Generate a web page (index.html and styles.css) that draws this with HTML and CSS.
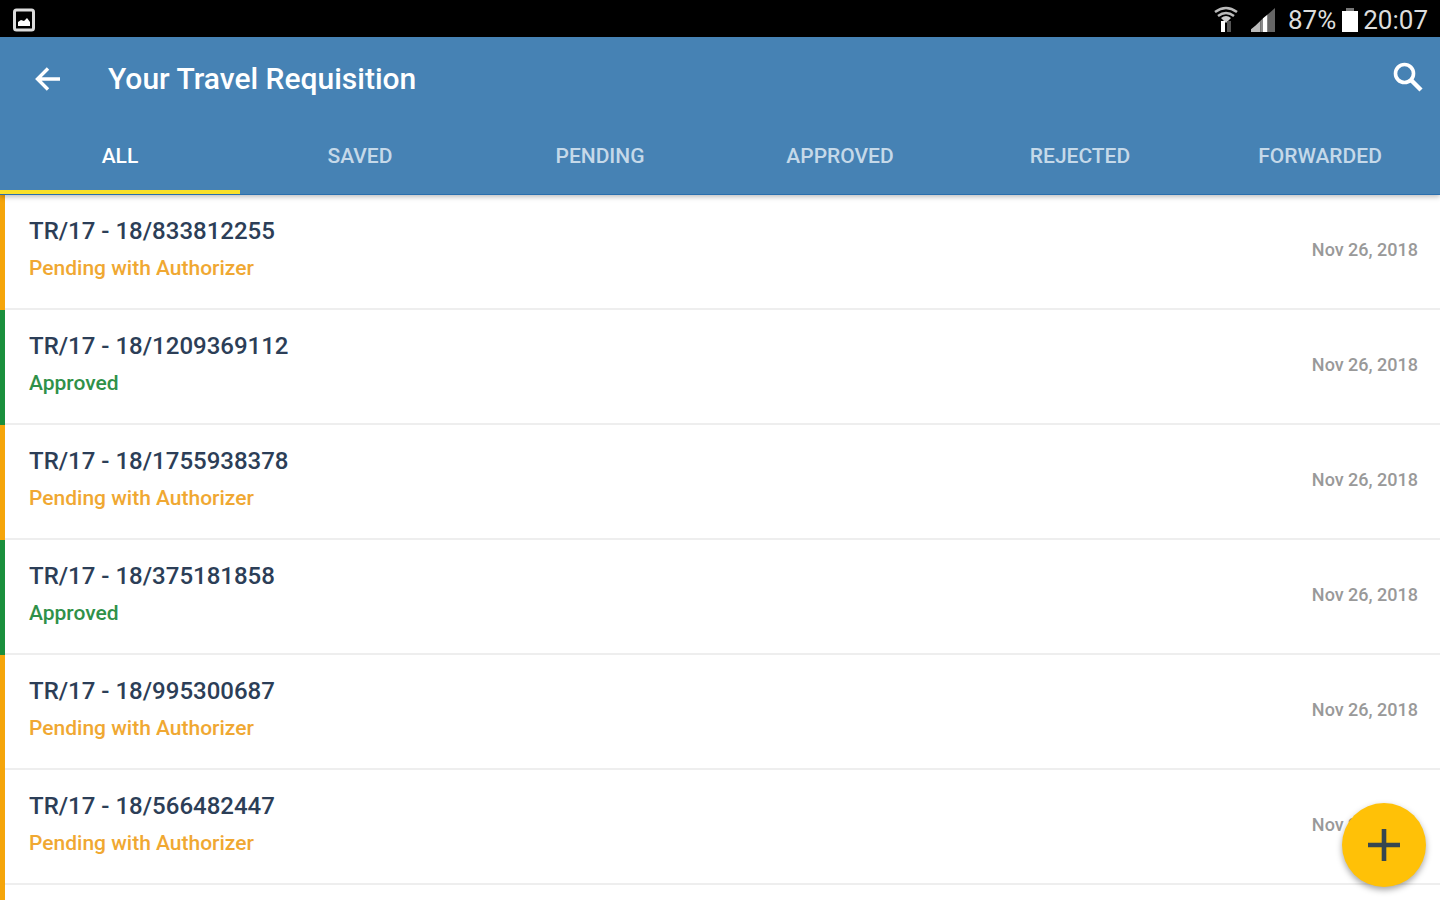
FILE: index.html
```html
<!DOCTYPE html>
<html lang="en">
    <head>
        <meta charset="UTF-8" />
        <meta name="viewport" content="width=device-width, initial-scale=1.0" />
        <title>Your Travel Requisition</title>
        <link rel="stylesheet" href="styles.css">
    </head>
    <body>
        <div class="status-bar">
            <svg class="icon-image" viewBox="0 0 24 24">
                <rect x="2.5" y="2" width="19" height="20" rx="2" fill="none" stroke="#ddd" stroke-width="3" />
                <path d="M6 18v-4l3-2 3 1 3-3 3 4v4z" fill="#fff" />
            </svg>
            <div class="status-right">
                <svg class="icon-wifi" viewBox="0 0 24 28">
                    <path d="M1 6Q12-2 23 6M4 10q8-6 16 0" fill="none" stroke="#bbb" stroke-width="2.5" />
                    <path d="M7 12q5-4 10 0l-5 5z" fill="#ccc" />
                    <path d="M9 15v11" fill="none" stroke="#fff" stroke-width="4" />
                    <path d="M15 15v11" fill="none" stroke="#555" stroke-width="4" />
                </svg>
                <svg class="icon-signal" viewBox="0 0 26 26">
                    <path d="M0 26v-3l5-4 5-5v12z" fill="#bbb" />
                    <path d="M10 26V14l3-3v15z" fill="#888" />
                    <path d="M13 26V11l5-4v19z" fill="#fff" />
                    <path d="M18 26V7l8-7v26z" fill="#666" />
                </svg>
                <span class="battery-level">87%</span>
                <svg class="icon-battery" viewBox="0 0 16 24">
                    <path d="M4 0h8v3H4z" fill="#777" />
                    <path d="M0 3h16v21H0z" fill="#fff" />
                </svg>
                <span>20:07</span>
            </div>
        </div>

        <header class="app-header">
            <div class="toolbar">
                <button class="icon-button" aria-label="Back">
                    <svg class="icon-back" viewBox="0 0 26 24">
                        <path d="M25 12H3M13 1.5L2.5 12 13 22.5" fill="none" stroke="currentColor" stroke-width="3.4" />
                    </svg>
                </button>
                <h1>Your Travel Requisition</h1>
                <button class="icon-button search" aria-label="Search">
                    <svg class="icon-search" viewBox="0 0 30 30">
                        <circle cx="11.5" cy="11.5" r="9" fill="none" stroke="currentColor" stroke-width="3.6" />
                        <path d="M18 18l10 10" fill="none" stroke="currentColor" stroke-width="4.4" />
                    </svg>
                </button>
            </div>
            <nav class="tabs">
                <a href="#all" class="tab active">ALL</a>
                <a href="#saved" class="tab">SAVED</a>
                <a href="#pending" class="tab">PENDING</a>
                <a href="#approved" class="tab">APPROVED</a>
                <a href="#rejected" class="tab">REJECTED</a>
                <a href="#forwarded" class="tab">FORWARDED</a>
            </nav>
        </header>

        <main class="content">
            <ul class="requisitions">
                <li class="requisition pending">
                    <div class="details">
                        <h2>TR/17 - 18/833812255</h2>
                        <p class="state">Pending with Authorizer</p>
                    </div>
                    <time datetime="2018-11-26">Nov 26, 2018</time>
                </li>
                <li class="requisition approved">
                    <div class="details">
                        <h2>TR/17 - 18/1209369112</h2>
                        <p class="state">Approved</p>
                    </div>
                    <time datetime="2018-11-26">Nov 26, 2018</time>
                </li>
                <li class="requisition pending">
                    <div class="details">
                        <h2>TR/17 - 18/1755938378</h2>
                        <p class="state">Pending with Authorizer</p>
                    </div>
                    <time datetime="2018-11-26">Nov 26, 2018</time>
                </li>
                <li class="requisition approved">
                    <div class="details">
                        <h2>TR/17 - 18/375181858</h2>
                        <p class="state">Approved</p>
                    </div>
                    <time datetime="2018-11-26">Nov 26, 2018</time>
                </li>
                <li class="requisition pending">
                    <div class="details">
                        <h2>TR/17 - 18/995300687</h2>
                        <p class="state">Pending with Authorizer</p>
                    </div>
                    <time datetime="2018-11-26">Nov 26, 2018</time>
                </li>
                <li class="requisition pending">
                    <div class="details">
                        <h2>TR/17 - 18/566482447</h2>
                        <p class="state">Pending with Authorizer</p>
                    </div>
                    <time datetime="2018-11-26">Nov 26, 2018</time>
                </li>
                <li class="requisition pending"></li>
            </ul>
        </main>

        <button class="fab" aria-label="Add requisition">
            <svg class="icon-plus" viewBox="0 0 34 34">
                <path d="M17 1v32M1 17h32" fill="none" stroke="currentColor" stroke-width="4.6" />
            </svg>
        </button>
    </body>
</html>
```

FILE: styles.css
```css
* {
    margin: 0;
    padding: 0;
    box-sizing: border-box;
}

body {
    font-family: Roboto, "Liberation Sans", sans-serif;
    background: #fff;
    height: 100vh;
    display: flex;
    flex-direction: column;
    overflow: hidden;
}

svg {
    display: block;
}

.status-bar {
    flex: none;
    height: 37px;
    padding: 3px 12px 0;
    display: flex;
    align-items: center;
    justify-content: space-between;
    background: #000;
    color: #ddd;
    font-size: 26px;
    line-height: 32px;
}

.status-right {
    display: flex;
    align-items: center;
}

.icon-image {
    width: 24px;
    height: 24px;
}

.icon-wifi {
    width: 24px;
    height: 28px;
    margin-right: 12px;
}

.icon-signal {
    width: 26px;
    height: 24px;
    margin-right: 12px;
}

.icon-battery {
    width: 16px;
    height: 24px;
    margin: 0 5px 0 6px;
}

.app-header {
    flex: none;
    position: relative;
    background: #4682b4;
    color: #fff;
    border-bottom: 1px solid #2a6fae;
    box-shadow: 0 2px 5px rgba(0, 0, 0, 0.25);
}

.toolbar {
    height: 84px;
    padding: 0 16px 0 32px;
    display: flex;
    align-items: center;
}

.toolbar h1 {
    flex: 1;
    margin-left: 44px;
    font-size: 30px;
    font-weight: 500;
    line-height: 36px;
}

.icon-button {
    width: 32px;
    height: 48px;
    display: flex;
    align-items: center;
    justify-content: center;
    background: none;
    border: none;
    color: #fff;
    cursor: pointer;
}

.icon-button.search {
    padding-bottom: 4px;
}

.icon-back {
    width: 26px;
    height: 24px;
}

.icon-search {
    flex: none;
    width: 30px;
    height: 30px;
}

.tabs {
    display: grid;
    grid-template-columns: repeat(6, 1fr);
}

.tab {
    height: 73px;
    display: flex;
    align-items: center;
    justify-content: center;
    border-bottom: 4px solid transparent;
    color: #c5d9e9;
    font-size: 21px;
    font-weight: 500;
    text-decoration: none;
}

.tab.active {
    color: #fff;
    border-bottom-color: #f9e02a;
}

.content {
    flex: 1;
    overflow: hidden;
}

.requisitions {
    list-style: none;
}

.requisition {
    height: 115px;
    padding: 0 22px 6px 24px;
    display: flex;
    align-items: center;
    justify-content: space-between;
    border-left: 5px solid;
    background: linear-gradient(#eee, #eee) left bottom / 100% 2px no-repeat;
}

.requisition.pending {
    border-left-color: #f5a50a;
}

.requisition.approved {
    border-left-color: #1a8f3c;
}

.details {
    padding-bottom: 2px;
}

.requisition h2 {
    margin-bottom: 8px;
    color: #2c3e57;
    font-size: 24px;
    font-weight: 500;
    line-height: 30px;
}

.state {
    font-size: 21px;
    font-weight: 500;
    line-height: 28px;
}

.pending .state {
    color: #f0a832;
}

.approved .state {
    color: #2f9149;
}

.requisition time {
    color: #999;
    font-size: 18px;
    font-weight: 500;
    line-height: 24px;
}

.fab {
    position: fixed;
    right: 14px;
    bottom: 13px;
    width: 84px;
    height: 84px;
    display: flex;
    align-items: center;
    justify-content: center;
    border: none;
    border-radius: 50%;
    background: #ffc107;
    color: #37474f;
    box-shadow: 0 3px 6px rgba(0, 0, 0, 0.35);
    cursor: pointer;
}

.icon-plus {
    width: 34px;
    height: 34px;
}
```
